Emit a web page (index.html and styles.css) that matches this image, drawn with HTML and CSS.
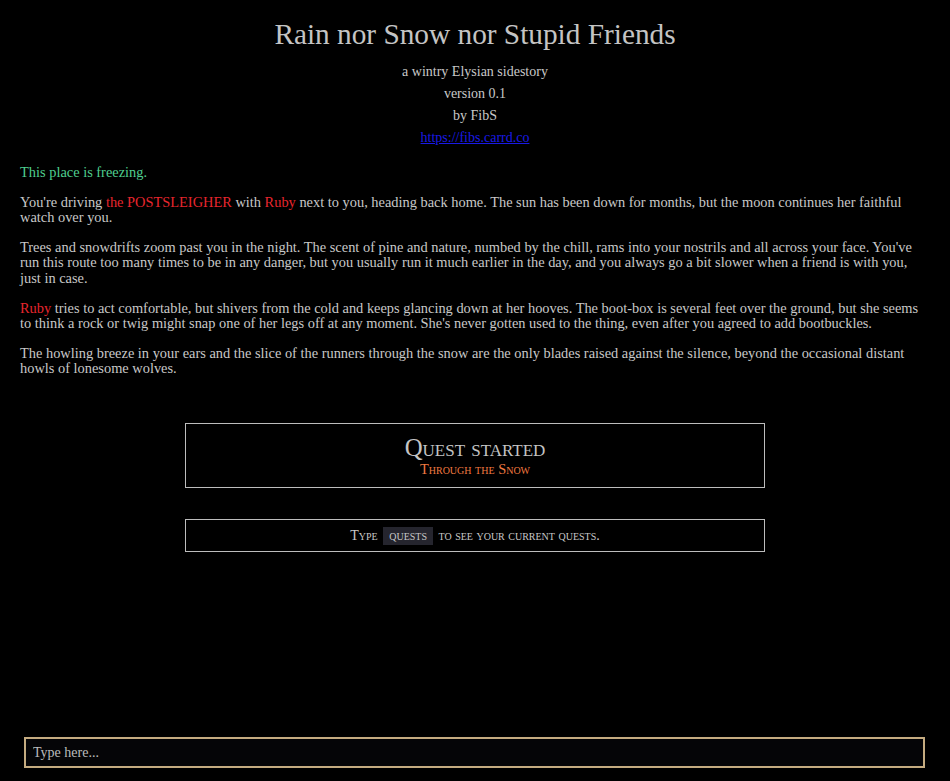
FILE: index.html
```html
<!DOCTYPE html>
<html>
<head>
<meta charset="utf-8">
<link rel="stylesheet" href="styles.css">
</head>
<body>
<div class="page">
  <main class="story">
    <header class="head">
      <h1 class="title">Rain nor Snow nor Stupid Friends</h1>
      <div class="sub">a wintry Elysian sidestory</div>
      <div class="sub">version 0.1</div>
      <div class="sub">by FibS</div>
      <div class="sub"><a class="link" href="#">https://fibs.carrd.co</a></div>
    </header>
    <p class="green">This place is freezing.</p>
    <p>You're driving <span class="red">the POSTSLEIGHER</span> with <span class="red">Ruby</span> next to you, heading back home. The sun has been down for months, but the moon continues her faithful watch over you.</p>
    <p>Trees and snowdrifts zoom past you in the night. The scent of pine and nature, numbed by the chill, rams into your nostrils and all across your face. You've run this route too many times to be in any danger, but you usually run it much earlier in the day, and you always go a bit slower when a friend is with you, just in case.</p>
    <p><span class="red">Ruby</span> tries to act comfortable, but shivers from the cold and keeps glancing down at her hooves. The boot-box is several feet over the ground, but she seems to think a rock or twig might snap one of her legs off at any moment. She's never gotten used to the thing, even after you agreed to add bootbuckles.</p>
    <p>The howling breeze in your ears and the slice of the runners through the snow are the only blades raised against the silence, beyond the occasional distant howls of lonesome wolves.</p>
    <section class="quest">
      <div class="quest-title">Quest started</div>
      <div class="quest-name">Through the Snow</div>
    </section>
    <section class="hint">Type <span class="cmd">quests</span> to see your current quests.</section>
  </main>
  <div class="inputbar"><input class="input" type="text" placeholder="Type here..."></div>
</div>
</body>
</html>
```
FILE: styles.css
```css
html, body { margin: 0; padding: 0; background: #000; }
body { font-family: "Liberation Serif", "Times New Roman", serif; color: #c8c8c8; }
.page { height: 781px; display: flex; flex-direction: column; box-sizing: border-box; }
.story { flex: 1; padding: 0 20px; }
.head { text-align: center; padding-top: 16px; margin-bottom: 16px; }
.title { font-weight: normal; font-size: 29.3px; margin: 0 0 9px; color: #c4c4c4; line-height: 36px; }
.sub { font-size: 14px; line-height: 22px; }
.link { color: #1a1ae6; }
p { font-size: 14.4px; line-height: 15.6px; margin: 0 0 14px; }
.green { color: #4fcf8f; }
.red { color: #e8262e; }
.quest { width: 580px; box-sizing: border-box; margin: 46px auto 0; border: 1px solid #bdbdbd; text-align: center; padding: 11px 0 9px; font-variant: small-caps; }
.quest-title { font-size: 24.8px; line-height: 26px; color: #c4c4c4; }
.quest-name { font-size: 14.4px; line-height: 17px; color: #f07a40; }
.hint { width: 580px; box-sizing: border-box; margin: 31px auto 0; border: 1px solid #bdbdbd; text-align: center; padding: 8px 0; font-variant: small-caps; font-size: 14px; line-height: 15px; }
.cmd { background: #25252e; padding: 1px 6px 2px; margin: 0 2px; }
.inputbar { padding: 0 25px 13px 24px; }
.input { width: 100%; box-sizing: border-box; height: 31px; background: #050507; border: 2px solid #c4ab80; color: #c8c8c8; font-family: "Liberation Serif", serif; font-size: 14px; padding: 0 7px; outline: none; }
.input::placeholder { color: #bcbcbc; }
```
